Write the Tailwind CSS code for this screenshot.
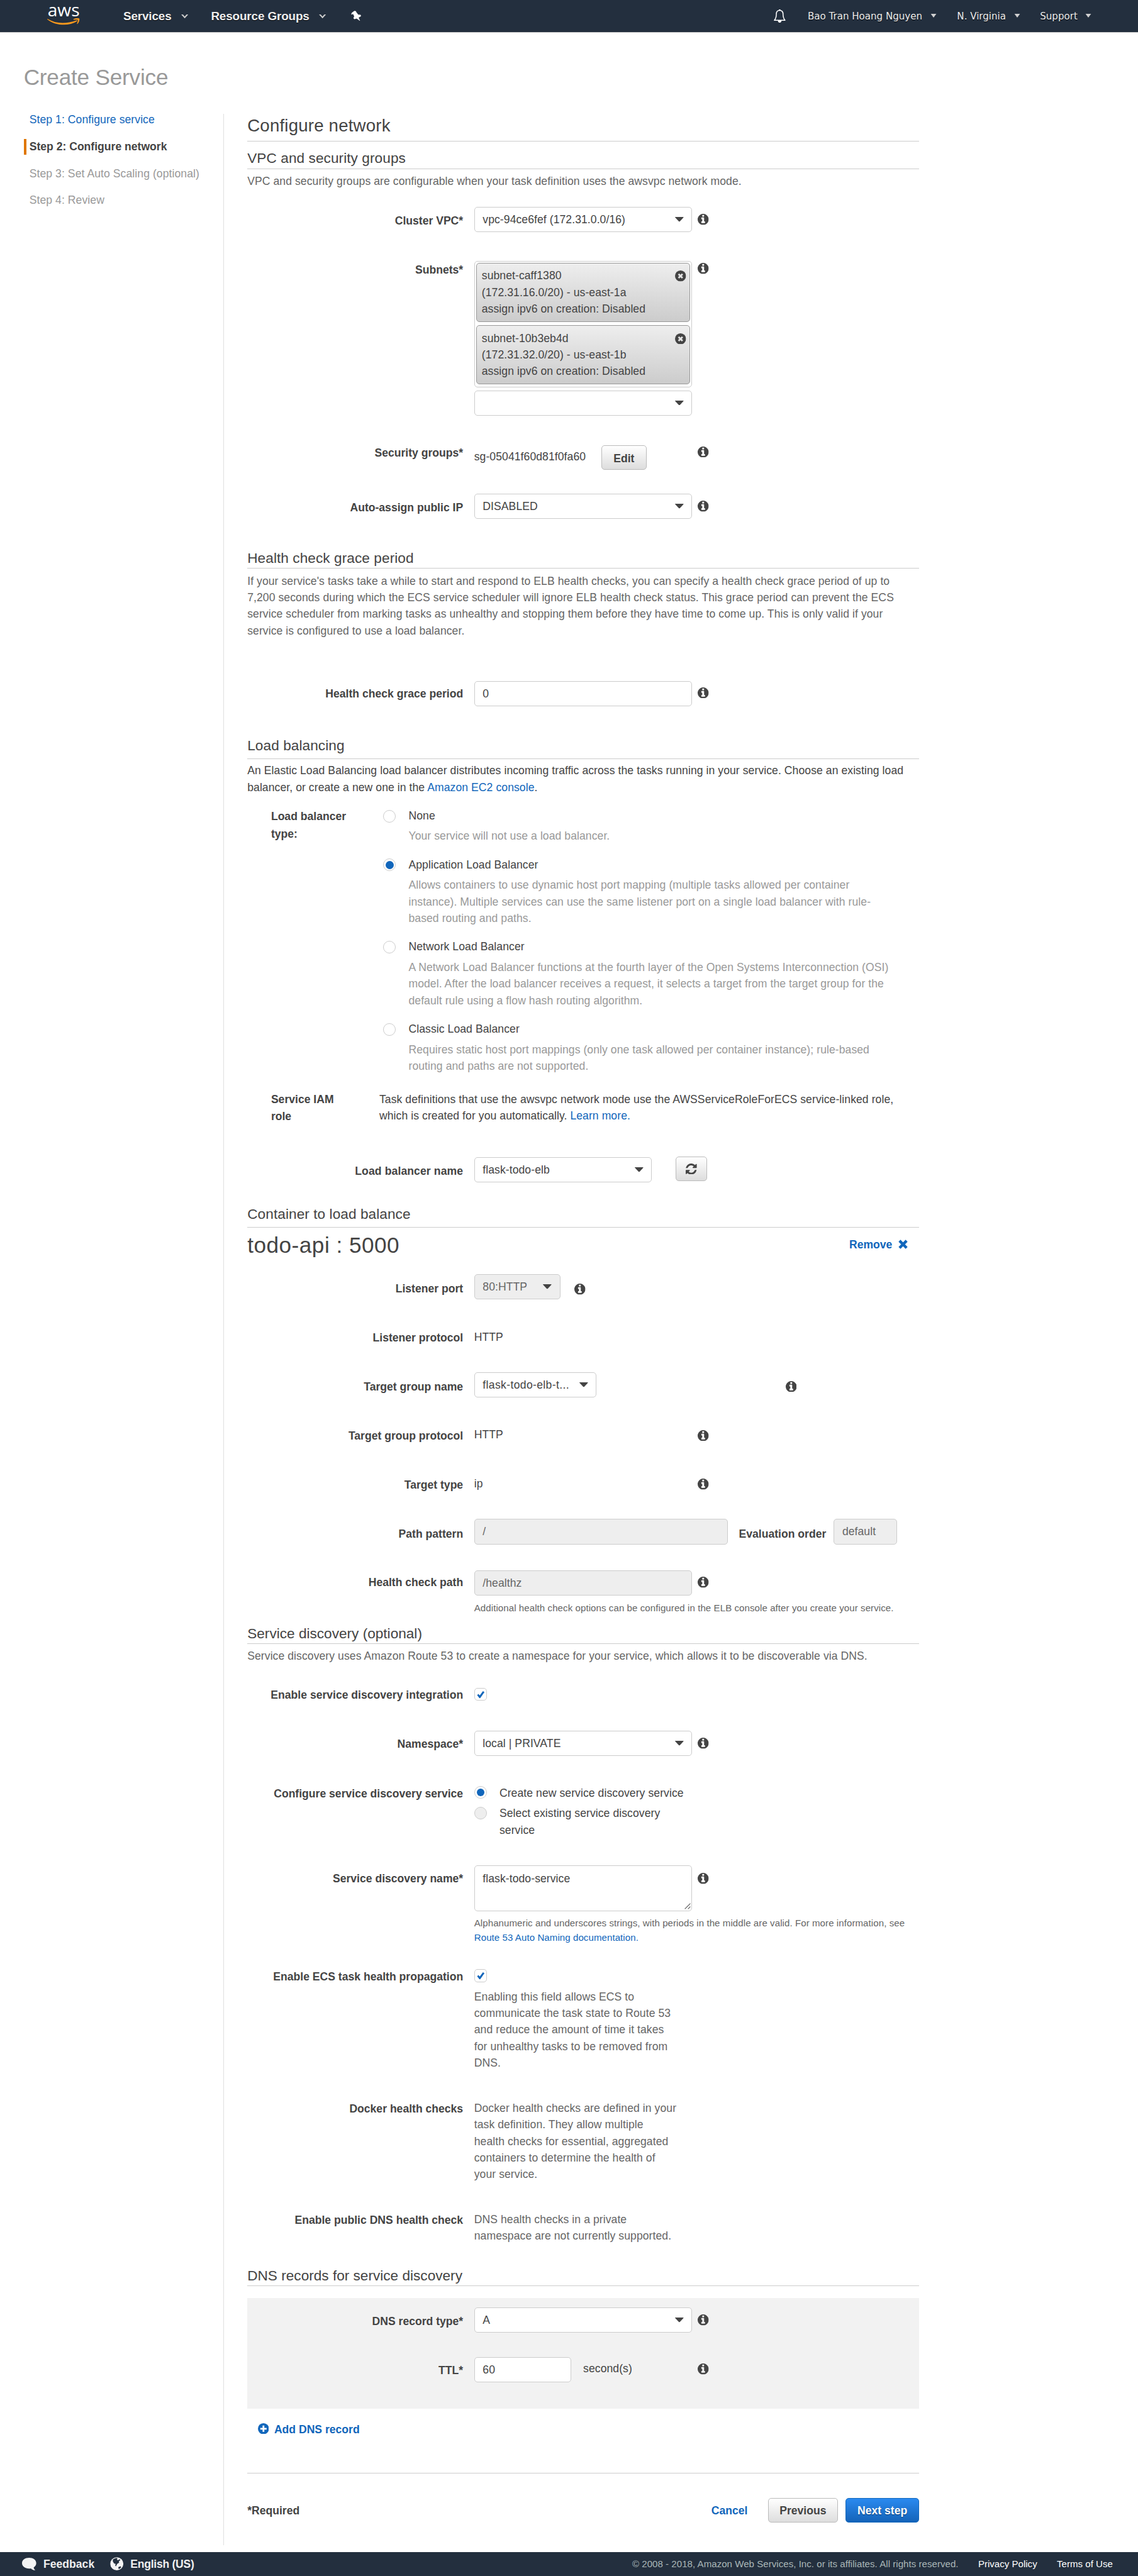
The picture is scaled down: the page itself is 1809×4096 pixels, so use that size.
<!DOCTYPE html>
<html lang="en" class="text-[20.1px]">
<head>
<meta charset="utf-8">
<title>Create Service</title>
<script src="https://cdn.jsdelivr.net/npm/@tailwindcss/browser@4"></script>
</head>
<body class="flex h-[4096px] flex-col bg-white font-['Liberation_Sans',Arial,sans-serif] text-sm leading-5.25 tracking-[0.004em] whitespace-nowrap text-[#444]">

<!-- icon symbols -->
<svg class="hidden">
  <symbol id="info" viewBox="0 128 1536 1536"><path fill="currentColor" d="M1024 1376v-160q0-14-9-23t-23-9h-96v-512q0-14-9-23t-23-9h-320q-14 0-23 9t-9 23v160q0 14 9 23t23 9h96v320h-96q-14 0-23 9t-9 23v160q0 14 9 23t23 9h448q14 0 23-9t9-23zm-128-896v-160q0-14-9-23t-23-9h-192q-14 0-23 9t-9 23v160q0 14 9 23t23 9h192q14 0 23-9t9-23zm640 416q0 209-103 385.5t-279.5 279.5-385.5 103-385.5-103-279.5-279.5-103-385.5 103-385.5 279.5-279.5 385.5-103 385.5 103 279.5 279.5 103 385.5z"/></symbol>
  <symbol id="caret" viewBox="0 0 22 12"><path fill="currentColor" d="M1 0h20q1.500 0 .6 1.300L12 11.500q-1 1-2 0L.4 1.300Q-.5 0 1 0z"/></symbol>
  <symbol id="navcaret" viewBox="0 0 16 10"><path fill="#d0d0d0" d="M1 0h14L8 9.500z"/></symbol>
  <symbol id="chevron" viewBox="0 0 18 10"><path fill="#ccc" d="M0 0h4.500L9 5l4.500-5H18L9 10z"/></symbol>
  <symbol id="check" viewBox="0 0 24 24"><path fill="#16b" d="M1 14.500l3.500-4 4.500 4.500L18.500 2 23 5 10 23.500H8z"/></symbol>
  <symbol id="close" viewBox="0 0 28 28"><circle cx="14" cy="14" r="14" fill="#444"/><path stroke="#e4e4e4" stroke-width="4.500" d="M9 9l10 10M19 9L9 19"/></symbol>
</svg>

<header class="flex h-10.25 shrink-0 items-center border-b border-[#ccc] bg-[#232f3e] pl-15 text-[#eee]">
  <div class="flex w-10.25 flex-col items-center">
    <span class="h-3.75 font-['Open_Sans',sans-serif] text-[1.4rem] leading-2 tracking-normal text-white">aws</span>
    <svg class="h-2.25 w-10.25" viewBox="0 0 82 18"><path fill="#f7981d" d="M1 1.500C22 14 46 15 74 5.500c2-.6 3 1 1 2.500C56 20 22 20 .5 3 0 2 .3 1.200 1 1.500z"/><path fill="#f7981d" d="M67 2c5-3 13-2.500 14.500-1 1 2-.5 10-5 13.500-.8.500-1.500.2-1.200-.7 1-2.500 3-8 2.200-9.300-1-1.200-7-.8-9.800-.5-1.200.1-1.500-1-.7-2z"/></svg>
  </div>
  <div class="flex items-center pt-0.5 pl-13.75 text-[0.9375rem] font-bold tracking-[-0.006em] [text-shadow:0_1px_0_#000]">
    <span class="w-18.25">Services</span>
    <svg class="h-1.25 w-2.25"><use href="#chevron"/></svg>
    <span class="ml-7.25 w-34.25">Resource Groups</span>
    <svg class="h-1.25 w-2.25"><use href="#chevron"/></svg>
  </div>
  <svg class="ml-7.75 h-3.25 w-3.25" viewBox="0 0 26 26"><path fill="#fff" d="M.5 8.500L2 5l6.500-4.500 4 .5.800 2.500 5 6.500 6 .5 1 3.500-6 3.500 4 9-9-6.500-5.800 1.500L6 19l2-5-3-5.500-3.500 1.500z"/></svg>
  <div class="ml-auto flex items-center pr-14.75 font-['DejaVu_Sans',sans-serif] text-xs tracking-normal [text-shadow:0_1px_0_#000]">
    <svg class="h-4.25 w-3.75" viewBox="0 0 30 34"><path fill="none" stroke="#fff" stroke-width="2.400" stroke-linejoin="round" d="M15 2.500c-5.500 0-8.500 4-8.500 9.500 0 8-1 11-5 15.500h27c-4-4.500-5-7.500-5-15.500 0-5.500-3-9.500-8.500-9.500z"/><path fill="#fff" d="M13 0h4v3h-4zM10.500 28.500h9c0 3-2 5-4.500 5s-4.500-2-4.500-5z"/></svg>
    <span class="ml-7 w-38.75 pt-0.5">Bao Tran Hoang Nguyen</span>
    <svg class="h-1.25 w-2"><use href="#navcaret"/></svg>
    <span class="ml-6.5 w-18 pt-0.5">N. Virginia</span>
    <svg class="h-1.25 w-2"><use href="#navcaret"/></svg>
    <span class="ml-6.25 w-14.25 pt-0.5">Support</span>
    <svg class="h-1.25 w-2"><use href="#navcaret"/></svg>
  </div>
</header>

<h1 class="mt-9.75 pl-7.5 text-[1.75rem] leading-9 tracking-[-0.006em] text-[#999]">Create Service</h1>

<div class="mt-6.5 mb-2.25 flex flex-1">

  <!-- wizard steps -->
  <nav class="mt-0.5 w-70.75 border-r border-[#e0e0e0] pl-7.5">
    <ul class="-mt-0.5 flex flex-col gap-3.5 leading-5 text-[#999]">
      <li class="border-l-4 border-transparent pl-1 text-[#16b]">Step 1: Configure service</li>
      <li class="border-l-4 border-[#e07700] pl-1 font-bold tracking-normal text-[#444]">Step 2: Configure network</li>
      <li class="border-l-4 border-transparent pl-1">Step 3: Set Auto Scaling (optional)</li>
      <li class="border-l-4 border-transparent pl-1">Step 4: Review</li>
    </ul>
  </nav>

  <main class="ml-7.5 w-212.5 pt-1.25">
    <h2 class="h-8 border-b border-[#ccc] text-[1.375rem] leading-6 tracking-[0.007em]">Configure network</h2>

    <h3 class="mt-2.5 h-6.25 border-b border-[#ccc] text-lg leading-6">VPC and security groups</h3>
    <p class="mt-1.25 text-[#666]">VPC and security groups are configurable when your task definition uses the awsvpc network mode.</p>

    <div class="mt-5.5 flex h-17 items-start">
      <label class="mt-1.75 w-71.75 pr-3.5 text-right font-bold tracking-normal">Cluster VPC*</label>
      <div class="flex h-8 w-69 items-center justify-between rounded border border-[#ccc] pr-2.5 pl-2.5"><span>vpc-94ce6fef (172.31.0.0/16)</span><svg class="h-1.5 w-2.75"><use href="#caret"/></svg></div>
      <svg class="mt-2.25 ml-1.75 size-3.5"><use href="#info"/></svg>
    </div>

    <div class="flex h-58 items-start">
      <label class="mt-0.25 w-71.75 pr-3.5 text-right font-bold tracking-normal">Subnets*</label>
      <div class="flex w-69 flex-col gap-1">
        <div class="flex h-40 flex-col gap-1 rounded border border-[#ccc] p-0.5">
          <div class="flex h-18.75 items-start justify-between rounded-[5px] border border-[#999] bg-linear-to-b from-[#eee] to-[#ccc] pt-1.25 pr-1 pl-1.5">
            <p>subnet-caff1380<br>(172.31.16.0/20) - us-east-1a<br>assign ipv6 on creation: Disabled</p>
            <svg class="mt-1 size-3.5"><use href="#close"/></svg>
          </div>
          <div class="flex h-18.75 items-start justify-between rounded-[5px] border border-[#999] bg-linear-to-b from-[#eee] to-[#ccc] pt-1.25 pr-1 pl-1.5">
            <p>subnet-10b3eb4d<br>(172.31.32.0/20) - us-east-1b<br>assign ipv6 on creation: Disabled</p>
            <svg class="mt-1 size-3.5"><use href="#close"/></svg>
          </div>
        </div>
        <div class="flex h-8 items-center justify-end rounded border border-[#ccc] pr-2.5"><svg class="h-1.5 w-2.75"><use href="#caret"/></svg></div>
      </div>
      <svg class="mt-0.75 ml-1.75 size-3.5"><use href="#info"/></svg>
    </div>

    <div class="flex h-15.75 items-start">
      <label class="mt-0.25 w-71.75 pr-3.5 text-right font-bold tracking-normal">Security groups*</label>
      <div class="flex w-69 items-start">
        <span class="mt-1.5 w-40.25">sg-05041f60d81f0fa60</span>
        <button class="mt-0.5 h-7.75 w-14.25 rounded border border-[#bbb] bg-linear-to-b from-white to-[#ddd] pt-0.5 font-bold tracking-normal">Edit</button>
      </div>
      <svg class="mt-0.75 ml-1.75 size-3.5"><use href="#info"/></svg>
    </div>

    <div class="flex h-17.5 items-start">
      <label class="mt-1.75 w-71.75 pr-3.5 text-right font-bold tracking-normal">Auto-assign public IP</label>
      <div class="flex h-8 w-69 items-center justify-between rounded border border-[#ccc] pr-2.5 pl-2.5"><span>DISABLED</span><svg class="h-1.5 w-2.75"><use href="#caret"/></svg></div>
      <svg class="mt-2.25 ml-1.75 size-3.5"><use href="#info"/></svg>
    </div>

    <h3 class="h-6.25 border-b border-[#ccc] text-lg leading-6">Health check grace period</h3>
    <p class="mt-1.25 text-[#666]">If your service's tasks take a while to start and respond to ELB health checks, you can specify a health check grace period of up to<br>7,200 seconds during which the ECS service scheduler will ignore ELB health check status. This grace period can prevent the ECS<br>service scheduler from marking tasks as unhealthy and stopping them before they have time to come up. This is only valid if your<br>service is configured to use a load balancer.</p>

    <div class="mt-13.25 flex h-17.5 items-start">
      <label class="mt-1.5 w-71.75 pr-3.5 text-right font-bold tracking-normal">Health check grace period</label>
      <div class="flex h-8 w-69 items-center rounded border border-[#ccc] pl-2.5">0</div>
      <svg class="mt-2 ml-1.75 size-3.5"><use href="#info"/></svg>
    </div>

    <h3 class="h-7.25 border-b border-[#ccc] text-lg leading-6">Load balancing</h3>
    <p class="mt-1">An Elastic Load Balancing load balancer distributes incoming traffic across the tasks running in your service. Choose an existing load<br>balancer, or create a new one in the <a class="text-[#16b]">Amazon EC2 console</a>.</p>

    <div class="mt-3.75 flex items-start pl-7.5">
      <p class="mt-0.25 w-35.5 leading-5.5 font-bold tracking-normal">Load balancer<br>type:</p>
      <div class="flex flex-col gap-3.75">
        <div class="flex items-start gap-4">
          <span class="mt-0.75 size-4 rounded-full border border-[#ccc]"></span>
          <div><p>None</p><p class="mt-1.25 text-[#999]">Your service will not use a load balancer.</p></div>
        </div>
        <div class="flex items-start gap-4">
          <span class="mt-0.75 flex size-4 items-center justify-center rounded-full border border-[#ccc]"><i class="size-2.5 rounded-full bg-[#16b]"></i></span>
          <div><p>Application Load Balancer</p><p class="mt-1.25 text-[#999]">Allows containers to use dynamic host port mapping (multiple tasks allowed per container<br>instance). Multiple services can use the same listener port on a single load balancer with rule-<br>based routing and paths.</p></div>
        </div>
        <div class="flex items-start gap-4">
          <span class="mt-0.75 size-4 rounded-full border border-[#ccc]"></span>
          <div><p>Network Load Balancer</p><p class="mt-1.25 text-[#999]">A Network Load Balancer functions at the fourth layer of the Open Systems Interconnection (OSI)<br>model. After the load balancer receives a request, it selects a target from the target group for the<br>default rule using a flow hash routing algorithm.</p></div>
        </div>
        <div class="flex items-start gap-4">
          <span class="mt-0.75 size-4 rounded-full border border-[#ccc]"></span>
          <div><p>Classic Load Balancer</p><p class="mt-1.25 text-[#999]">Requires static host port mappings (only one task allowed per container instance); rule-based<br>routing and paths are not supported.</p></div>
        </div>
      </div>
    </div>

    <div class="mt-5.25 flex h-11 items-start pl-7.5">
      <p class="w-34.25 leading-5.5 font-bold tracking-normal">Service IAM<br>role</p>
      <p>Task definitions that use the awsvpc network mode use the AWSServiceRoleForECS service-linked role,<br>which is created for you automatically. <a class="text-[#16b]">Learn more.</a></p>
    </div>

    <div class="mt-9.75 flex h-15.25 items-start">
      <label class="mt-2 w-71.75 pr-3.5 text-right font-bold tracking-[0.006em]">Load balancer name</label>
      <div class="mt-0.25 flex h-8 w-56.25 items-center justify-between rounded border border-[#ccc] pr-2.5 pl-2.5"><span>flask-todo-elb</span><svg class="h-1.5 w-2.75"><use href="#caret"/></svg></div>
      <button class="ml-7.5 flex h-7.75 w-10 items-center justify-center rounded border border-[#bbb] bg-linear-to-b from-white to-[#ddd]">
        <svg class="size-3.5" viewBox="0 0 1536 1536"><path fill="#444" d="M1511 928q0 5-1 7-64 268-268 434.5t-478 166.500q-146 0-282.500-55t-243.500-157l-129 129q-19 19-45 19t-45-19-19-45v-448q0-26 19-45t45-19h448q26 0 45 19t19 45-19 45l-137 137q71 66 161 102t187 36q134 0 250-65t186-179q11-17 53-117 8-23 30-23h192q13 0 22.500 9.500t9.500 22.500zm25-800v448q0 26-19 45t-45 19h-448q-26 0-45-19t-19-45 19-45l138-138q-148-137-349-137-134 0-250 65t-186 179q-11 17-53 117-8 23-30 23h-199q-13 0-22.500-9.500t-9.500-22.500v-7q65-268 270-434.500t480-166.500q146 0 284 55.500t245 156.500l130-129q19-19 45-19t45 19 19 45z"/></svg>
      </button>
    </div>

    <h3 class="h-7.25 border-b border-[#ccc] text-lg leading-6">Container to load balance</h3>
    <div class="mt-1 flex h-9 items-start justify-between">
      <h2 class="text-[1.75rem] leading-9 tracking-[0.014em]">todo-api : 5000</h2>
      <a class="mt-1.75 flex items-start gap-2 pr-3.5 font-bold tracking-normal text-[#16b]">Remove<svg class="mt-1 size-3" viewBox="0 0 24 24"><path stroke="#16b" stroke-width="7" d="M3 3l18 18M21 3L3 21"/></svg></a>
    </div>

    <div class="mt-4.75 flex h-17 items-start">
      <label class="mt-2 w-71.75 pr-3.5 text-right font-bold tracking-normal">Listener port</label>
      <div class="flex h-8 w-27.25 items-center justify-between rounded border border-[#ccc] bg-[#eee] pr-2.5 pl-2.5"><span class="text-[#666]">80:HTTP</span><svg class="h-1.5 w-2.75"><use href="#caret"/></svg></div>
      <svg class="mt-3 ml-4.5 size-3.5"><use href="#info"/></svg>
    </div>
    <div class="flex h-14 items-start">
      <label class="mt-0.5 w-71.75 pr-3.5 text-right font-bold tracking-normal">Listener protocol</label>
      <span class="mt-0.25">HTTP</span>
    </div>
    <div class="flex h-17 items-start">
      <label class="mt-2 w-71.75 pr-3.5 text-right font-bold tracking-normal">Target group name</label>
      <div class="flex h-8 w-38.75 items-center justify-between rounded border border-[#ccc] pr-2.5 pl-2.5"><span class="tracking-[0.02em]">flask-todo-elb-t...</span><svg class="h-1.5 w-2.75"><use href="#caret"/></svg></div>
      <svg class="mt-2.75 ml-59.75 size-3.5"><use href="#info"/></svg>
    </div>
    <div class="flex h-15.5 items-start">
      <label class="mt-0.5 w-71.75 pr-3.5 text-right font-bold tracking-normal">Target group protocol</label>
      <span class="mt-0.25 w-70.75">HTTP</span>
      <svg class="mt-1.25 size-3.5"><use href="#info"/></svg>
    </div>
    <div class="flex h-14 items-start">
      <label class="mt-0.5 w-71.75 pr-3.5 text-right font-bold tracking-normal">Target type</label>
      <span class="mt-0.25 w-70.75">ip</span>
      <svg class="mt-1.25 size-3.5"><use href="#info"/></svg>
    </div>
    <div class="flex h-16.25 items-start">
      <label class="mt-2 w-71.75 pr-3.5 text-right font-bold tracking-normal">Path pattern</label>
      <div class="flex h-8 w-80.25 items-center rounded border border-[#ccc] bg-[#eee] pl-2.5 text-[#666]">/</div>
      <label class="mt-2 w-33.5 pl-3.5 font-bold tracking-normal">Evaluation order</label>
      <div class="flex h-8 w-20 items-center rounded border border-[#ccc] bg-[#eee] pl-2.5 text-[#666]">default</div>
    </div>
    <div class="flex h-17 items-start">
      <label class="mt-1.25 w-71.75 pr-3.5 text-right font-bold tracking-normal">Health check path</label>
      <div class="w-69">
        <div class="flex h-8 items-center rounded border border-[#ccc] bg-[#eee] pl-2.5 text-[#666]">/healthz</div>
        <p class="mt-1.75 text-xs leading-4.5 text-[#666]">Additional health check options can be configured in the ELB console after you create your service.</p>
      </div>
      <svg class="mt-2 ml-1.75 size-3.5"><use href="#info"/></svg>
    </div>

    <h3 class="h-6.25 border-b border-[#ccc] text-lg leading-6 tracking-normal">Service discovery (optional)</h3>
    <p class="mt-1.25 text-[#666]">Service discovery uses Amazon Route 53 to create a namespace for your service, which allows it to be discoverable via DNS.</p>

    <div class="mt-7 flex h-14 items-start">
      <label class="w-71.75 pr-3.5 text-right font-bold tracking-normal">Enable service discovery integration</label>
      <span class="mt-0.5 flex size-4 items-center justify-center rounded border border-[#ccc]"><svg class="size-2.5"><use href="#check"/></svg></span>
    </div>
    <div class="flex h-17 items-start">
      <label class="mt-1.5 w-71.75 pr-3.5 text-right font-bold tracking-normal">Namespace*</label>
      <div class="flex h-8 w-69 items-center justify-between rounded border border-[#ccc] pr-2.5 pl-2.5"><span>local | PRIVATE</span><svg class="h-1.5 w-2.75"><use href="#caret"/></svg></div>
      <svg class="mt-2.25 ml-1.75 size-3.5"><use href="#info"/></svg>
    </div>
    <div class="flex h-25.5 items-start">
      <label class="mt-0.25 w-71.75 pr-3.5 text-right font-bold tracking-normal">Configure service discovery service</label>
      <div class="flex flex-col gap-1.25">
        <div class="flex items-start gap-4">
          <span class="mt-0.5 flex size-4 items-center justify-center rounded-full border border-[#ccc]"><i class="size-2.5 rounded-full bg-[#16b]"></i></span>
          <span>Create new service discovery service</span>
        </div>
        <div class="flex items-start gap-4">
          <span class="mt-0.5 size-4 rounded-full border border-[#ccc] bg-[#eee]"></span>
          <span>Select existing service discovery<br>service</span>
        </div>
      </div>
    </div>
    <div class="flex h-32.5 items-start">
      <label class="mt-1.75 w-71.75 pr-3.5 text-right font-bold tracking-normal">Service discovery name*</label>
      <div class="w-69">
        <div class="flex h-14.5 items-start justify-between rounded border border-[#ccc] pt-1.5 pl-2.5">
          <span>flask-todo-service</span>
          <svg class="size-2.25 self-end" viewBox="0 0 18 18"><path stroke="#555" stroke-width="1.800" d="M1 15L15 1M9 15l6-6"/></svg>
        </div>
        <p class="mt-1.75 text-xs leading-4.5 text-[#666]">Alphanumeric and underscores strings, with periods in the middle are valid. For more information, see<br><a class="text-[#16b]">Route 53 Auto Naming documentation.</a></p>
      </div>
      <svg class="mt-2.5 ml-1.75 size-3.5"><use href="#info"/></svg>
    </div>
    <div class="flex h-41.75 items-start">
      <label class="mt-0.25 w-71.75 pr-3.5 text-right font-bold tracking-normal">Enable ECS task health propagation</label>
      <div class="mt-0.5">
        <span class="flex size-4 items-center justify-center rounded border border-[#ccc]"><svg class="size-2.5"><use href="#check"/></svg></span>
        <p class="mt-2 text-[#666]">Enabling this field allows ECS to<br>communicate the task state to Route 53<br>and reduce the amount of time it takes<br>for unhealthy tasks to be removed from<br>DNS.</p>
      </div>
    </div>
    <div class="flex h-35.25 items-start">
      <label class="mt-0.25 w-71.75 pr-3.5 text-right font-bold tracking-normal">Docker health checks</label>
      <p class="text-[#666]">Docker health checks are defined in your<br>task definition. They allow multiple<br>health checks for essential, aggregated<br>containers to determine the health of<br>your service.</p>
    </div>
    <div class="flex h-17.5 items-start">
      <label class="mt-0.25 w-71.75 pr-3.5 text-right font-bold tracking-normal">Enable public DNS health check</label>
      <p class="text-[#666]">DNS health checks in a private<br>namespace are not currently supported.</p>
    </div>

    <h3 class="h-6.25 border-b border-[#ccc] text-lg leading-6 tracking-normal">DNS records for service discovery</h3>
    <div class="mt-3.75 h-35 bg-[#f2f2f2] pt-3">
      <div class="flex h-15.75 items-start">
        <label class="mt-1.75 w-71.75 pr-3.5 text-right font-bold tracking-normal">DNS record type*</label>
        <div class="flex h-8 w-69 items-center justify-between rounded border border-[#ccc] bg-white pr-2.5 pl-2.5"><span>A</span><svg class="h-1.5 w-2.75"><use href="#caret"/></svg></div>
        <svg class="mt-2.25 ml-1.75 size-3.5"><use href="#info"/></svg>
      </div>
      <div class="flex items-start">
        <label class="mt-1.5 w-71.75 pr-3.5 text-right font-bold tracking-normal">TTL*</label>
        <div class="flex h-8 w-30.75 items-center rounded border border-[#ccc] bg-white pl-2.5">60</div>
        <span class="mt-1 ml-3.75 w-36.25">second(s)</span>
        <svg class="mt-2 size-3.5"><use href="#info"/></svg>
      </div>
    </div>
    <a class="mt-4 flex items-start pl-3.25 font-bold tracking-normal text-[#16b]"><svg class="mt-0.5 mr-1.75 size-3.5" viewBox="0 0 28 28"><circle cx="14" cy="14" r="14" fill="#16b"/><path stroke="#fff" stroke-width="4.500" d="M14 6v16M6 14h16"/></svg>Add DNS record</a>

    <div class="mt-11 flex items-start border-t border-[#ccc] pt-7.75 font-bold tracking-normal">
      <span class="mt-1.5">*Required</span>
      <a class="mt-1.5 mr-6.5 ml-auto text-[#16b]">Cancel</a>
      <button class="mr-2.5 h-7.75 w-22 rounded border border-[#bbb] bg-linear-to-b from-white to-[#ddd] pt-0.5">Previous</button>
      <button class="h-7.75 w-23.25 rounded border border-[#16b] bg-linear-to-b from-[#2a8af0] to-[#1463b8] pt-0.5 text-white [text-shadow:0_1px_1px_#0a3a70]">Next step</button>
    </div>
  </main>
</div>

<footer class="flex h-7.5 shrink-0 items-center bg-[#232f3e] pl-7 font-bold tracking-normal text-[#eee]">
  <svg class="h-4 w-4.5" viewBox="0 0 36 32"><path fill="#f4f4f4" d="M18 0c10 0 18 5.500 18 13.500 0 5-2.500 8.500-6.500 11 .5 3 2 5 4.500 7-4.500.5-8.500-1.500-11.500-4.500-1.500.2-3 .3-4.500.3C8 27.300 0 22 0 13.500S8 0 18 0z"/></svg>
  <span class="ml-2.25 w-21">Feedback</span>
  <svg class="size-4.25" viewBox="0 0 34 34"><circle cx="17" cy="17" r="16.500" fill="#f4f4f4"/><path fill="#232f3e" d="M7 6l5-3 5-1 2 2-2 2 3 2 4-3 2 2-4 4 1 3-5 3-3 6-2-1 1-5-4-1-3-5zM21 25l6-2 1 3-4 4-3-1z"/></svg>
  <span class="ml-2.25 tracking-[-0.015em]">English (US)</span>
  <div class="ml-auto flex gap-6.25 pr-8 text-xs font-normal text-white">
    <span class="tracking-[0.002em] text-[#aab7b8]">© 2008 - 2018, Amazon Web Services, Inc. or its affiliates. All rights reserved.</span>
    <span>Privacy Policy</span>
    <span>Terms of Use</span>
  </div>
</footer>
</body>
</html>
